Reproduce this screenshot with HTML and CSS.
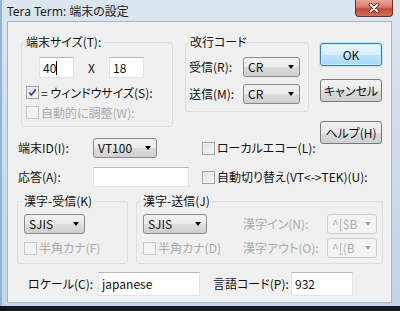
FILE: index.html
```html
<!DOCTYPE html>
<html lang="ja">
<head>
    <meta charset="UTF-8">
    <title>Tera Term: 端末の設定</title>
    <link rel="stylesheet" href="styles.css">
</head>
<body>

    <div class="window">
        <!-- Barra de titulo -->
        <div class="titlebar">
            <span class="title">Tera Term: 端末の設定</span>
            <span class="close">
                <svg width="12" height="10" viewBox="0 0 12 10">
                    <path d="M2.5 1.5 L9.5 8.5 M9.5 1.5 L2.5 8.5" stroke="#4b1c14" stroke-width="3.6" stroke-linecap="round"/>
                    <path d="M2.5 1.5 L9.5 8.5 M9.5 1.5 L2.5 8.5" stroke="#ffffff" stroke-width="2" stroke-linecap="round"/>
                </svg>
            </span>
        </div>

        <div class="client">
            <!-- Fila superior -->
            <div class="top">
                <fieldset class="group g-size">
                    <legend>端末サイズ(T):</legend>
                    <div class="size-row">
                        <div class="edit num">40<span class="caret"></span></div>
                        <span class="times">X</span>
                        <div class="edit num">18</div>
                    </div>
                    <div class="check first">
                        <span class="box">
                            <svg width="11" height="11" viewBox="0 0 11 11"><path d="M2.2 5.6 L4.4 8 L8.8 2.4" fill="none" stroke="#3a4a8a" stroke-width="1.7"/></svg>
                        </span>
                        <span>= ウィンドウサイズ(S):</span>
                    </div>
                    <div class="check second disabled">
                        <span class="box"></span>
                        <span>自動的に調整(W):</span>
                    </div>
                </fieldset>

                <fieldset class="group g-crlf">
                    <legend>改行コード</legend>
                    <div class="field-row first">
                        <span class="lbl crlf-lbl">受信(R):</span>
                        <div class="combo crlf">CR</div>
                    </div>
                    <div class="field-row second">
                        <span class="lbl crlf-lbl">送信(M):</span>
                        <div class="combo crlf">CR</div>
                    </div>
                </fieldset>

                <div class="buttons">
                    <button class="btn default">OK</button>
                    <button class="btn cancel">キャンセル</button>
                    <button class="btn help">ヘルプ(H)</button>
                </div>
            </div>

            <!-- Terminal ID -->
            <div class="row row-id">
                <span class="lbl id-lbl">端末ID(I):</span>
                <div class="combo term-id">VT100</div>
                <div class="check echo">
                    <span class="box"></span>
                    <span>ローカルエコー(L):</span>
                </div>
            </div>

            <!-- Respuesta -->
            <div class="row row-answer">
                <span class="lbl id-lbl">応答(A):</span>
                <div class="edit answer"></div>
                <div class="check auto">
                    <span class="box"></span>
                    <span>自動切り替え(VT&lt;-&gt;TEK)(U):</span>
                </div>
            </div>

            <!-- Kanji -->
            <div class="kanji">
                <fieldset class="group g-recv">
                    <legend>漢字-受信(K)</legend>
                    <div class="kgrid">
                        <div class="combo sjis-r">SJIS</div>
                        <div class="check disabled">
                            <span class="box"></span>
                            <span>半角カナ(F)</span>
                        </div>
                    </div>
                </fieldset>

                <fieldset class="group g-send">
                    <legend>漢字-送信(J)</legend>
                    <div class="kgrid send">
                        <div class="combo sjis-s">SJIS</div>
                        <span class="lbl disabled-text">漢字イン(N):</span>
                        <div class="combo esc disabled">^[$B</div>
                        <div class="check disabled">
                            <span class="box"></span>
                            <span>半角カナ(D)</span>
                        </div>
                        <span class="lbl disabled-text">漢字アウト(O):</span>
                        <div class="combo esc disabled">^[(B</div>
                    </div>
                </fieldset>
            </div>

            <!-- Locale -->
            <div class="row row-locale">
                <span class="lbl locale-lbl">ロケール(C):</span>
                <div class="edit locale">japanese</div>
                <span class="lbl code-lbl">言語コード(P):</span>
                <div class="edit code">932</div>
            </div>
        </div>
    </div>

</body>
</html>
```

FILE: styles.css
```css
/* Estilos generales */
* {
    box-sizing: border-box;
}
body {
    margin: 0;
    width: 400px;
    height: 311px;
    overflow: hidden;
    background-color: #15181d;
    font-family: "Noto Sans CJK JP", sans-serif;
    font-size: 12px;
    font-feature-settings: "palt";
    color: #111;
}

/* Ventana */
.window {
    height: 306px;
    display: flex;
    flex-direction: column;
    padding: 0 8px 3px 5px;
    background: linear-gradient(180deg, #dce6f1 0%, #d0dcea 45%, #c3d4e6 100%);
    border-left: 2px solid #8fb4d6;
}
.titlebar {
    height: 21px;
    display: flex;
    align-items: flex-start;
}
.title {
    font-family: "Noto Sans", "Noto Sans CJK JP", sans-serif;
    font-size: 12px;
    line-height: 14px;
    padding-top: 5px;
    margin-left: 0;
    color: #1b1b1b;
}
.close {
    margin-left: auto;
    margin-right: -1px;
    width: 38px;
    height: 17px;
    display: flex;
    align-items: center;
    justify-content: center;
    border: 1px solid #7a2a1e;
    border-top: none;
    border-radius: 0 0 4px 4px;
    background: linear-gradient(180deg, #e9a598 0%, #d77b6b 45%, #c24a36 55%, #d0705a 100%);
}
.client {
    flex: 1;
    background-color: #f0f0f0;
    border: 1px solid #a4b6ca;
}

/* Grupos */
.group {
    margin: 0;
    padding: 0;
    min-width: 0;
    border: 1px solid #dcdfe2;
    border-radius: 3px;
}
.group legend {
    padding: 0 2px;
    margin-left: 2px;
    height: 12px;
    line-height: 12px;
}
.lbl {
    line-height: 14px;
    white-space: nowrap;
}
.disabled-text,
.disabled {
    color: #ababab;
}

/* Controles */
.edit {
    height: 21px;
    background-color: #fff;
    border: 1px solid #e2e3ea;
    border-top-color: #b5b7bd;
    padding-left: 3px;
    display: flex;
    align-items: center;
    line-height: 14px;
}
.caret {
    display: inline-block;
    width: 1px;
    height: 14px;
    background-color: #000;
}
.combo {
    height: 20px;
    display: flex;
    align-items: center;
    padding: 0 5px 0 4px;
    border: 1px solid #8a8a8a;
    border-radius: 3px;
    background: linear-gradient(180deg, #f2f2f2 0%, #ebebeb 50%, #dddddd 50%, #cfcfcf 100%);
    line-height: 14px;
}
.combo::after {
    content: "";
    margin-left: auto;
    border-left: 3px solid transparent;
    border-right: 3px solid transparent;
    border-top: 4px solid #000;
}
.combo.disabled {
    background: #f4f4f4;
    border-color: #c9cdd0;
}
.combo.disabled::after {
    border-top-color: #a8a8a8;
}
.check {
    display: flex;
    align-items: center;
    height: 13px;
    line-height: 14px;
    white-space: nowrap;
}
.box {
    width: 13px;
    height: 13px;
    margin-right: 2px;
    flex-shrink: 0;
    border: 1px solid #a0a1a1;
    background: linear-gradient(135deg, #dcdfe3 0%, #f8f8f8 100%);
    box-shadow: inset 0 0 0 1px #f4f4f4;
    display: flex;
    align-items: center;
    justify-content: center;
}
.check.disabled .box {
    border-color: #c8c8c8;
    background: #f4f4f4;
}
.btn {
    width: 62px;
    height: 23px;
    padding: 0;
    font-family: "Noto Sans CJK JP", sans-serif;
    font-size: 12px;
    font-feature-settings: "palt";
    color: #111;
    border: 1px solid #7a7a7a;
    border-radius: 3px;
    background: linear-gradient(180deg, #f2f2f2 0%, #ebebeb 50%, #dddddd 50%, #cfcfcf 100%);
    white-space: nowrap;
}
.btn.default {
    border-color: #3c7fb1;
    background: linear-gradient(180deg, #eaf6fd 0%, #d9f0fc 50%, #bee6fd 50%, #a7d9f5 100%);
    box-shadow: 0 0 0 1px #bfe3f6, inset 0 0 0 1px #c6ecfb;
}

/* Fila superior */
.top {
    display: flex;
    align-items: flex-start;
    height: 91px;
    margin: 14px 0 0 13px;
}
.g-size {
    width: 152px;
    height: 91px;
}
.size-row {
    display: flex;
    align-items: center;
    margin: 9px 0 0 17px;
}
.num {
    width: 35px;
}
.times {
    width: 35px;
    text-align: center;
    line-height: 14px;
}
.g-size .check {
    margin-left: 4px;
}
.g-size .check.first {
    margin-top: 8px;
}
.g-size .check.second {
    margin-top: 7px;
}
.g-crlf {
    width: 124px;
    height: 76px;
    margin-left: 12px;
}
.field-row {
    display: flex;
    align-items: center;
    height: 20px;
    margin-left: 3px;
}
.field-row.first {
    margin-top: 9px;
}
.field-row.second {
    margin-top: 7px;
}
.crlf-lbl {
    width: 54px;
}
.crlf {
    width: 57px;
}
.buttons {
    display: flex;
    flex-direction: column;
    margin-left: 11px;
    padding-top: 7px;
}
.cancel {
    margin-top: 13px;
}
.help {
    margin-top: 19px;
}

/* Filas */
.row {
    display: flex;
    align-items: center;
    margin-left: 10px;
}
.row-id {
    height: 20px;
    margin-top: 11px;
}
.row-answer {
    height: 20px;
    margin-top: 9px;
}
.id-lbl {
    width: 75px;
}
.term-id {
    width: 64px;
}
.echo {
    margin-left: 45px;
}
.answer {
    width: 96px;
    height: 20px;
}
.auto {
    margin-left: 13px;
}

/* Kanji */
.kanji {
    display: flex;
    margin: 8px 0 0 9px;
}
.g-recv {
    width: 111px;
    height: 69px;
}
.g-send {
    width: 247px;
    height: 69px;
    margin-left: 8px;
}
.g-recv legend,
.g-send legend {
    margin-left: 4px;
}
.kgrid {
    display: grid;
    grid-template-rows: 20px 20px;
    row-gap: 4px;
    align-items: center;
    margin: 7px 0 0 6px;
}
.kgrid.send {
    grid-template-columns: 100px 84px 50px;
}
.sjis-r {
    width: 61px;
}
.sjis-s {
    width: 64px;
}
.esc {
    width: 50px;
}

/* Locale */
.row-locale {
    height: 24px;
    margin: 8px 0 0 20px;
}
.locale-lbl {
    width: 70px;
}
.locale {
    width: 102px;
    height: 24px;
}
.code-lbl {
    width: 78px;
    margin-left: 13px;
}
.code {
    width: 62px;
    height: 24px;
}
```
